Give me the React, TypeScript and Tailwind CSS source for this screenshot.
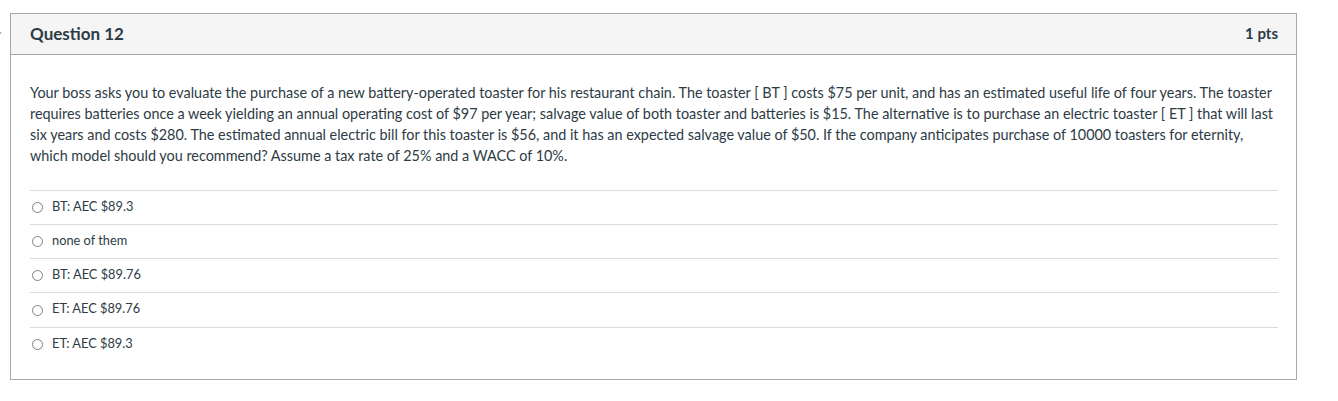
import React from "react";

const answers = ["BT: AEC $89.3", "none of them", "BT: AEC $89.76", "ET: AEC $89.76", "ET: AEC $89.3"];

export default function App() {
  return (
    <div className="relative w-[1338px] h-[401px] bg-white" style={{ fontFamily: "Lato, 'Noto Sans', sans-serif" }}>
      <div className="absolute left-[-4px] top-[29px] w-0 h-0 border-y-[4px] border-y-transparent border-l-[6px] border-l-[#9fb4c4]" />
      <div className="ml-[10px] pt-[13px] w-[1287px]">
        <div className="border border-[#a8a8a8]">
          <div className="h-[41px] bg-[#f5f5f5] border-b border-[#a8a8a8] flex items-center justify-between pl-[19px] pr-[18px] text-[#2d3b45]">
            <span className="text-[17px] font-bold -mt-[1px]">Question 12</span>
            <span className="text-[15px] font-bold -mt-[1px]">1 pts</span>
          </div>
          <div className="pl-[19px] pr-[18px] pt-[27px] pb-[18px]">
            <p className="text-[14.4px] leading-[21px] text-[#2d3b45]">
              Your boss asks you to evaluate the purchase of a new battery-operated toaster for his restaurant chain. The toaster [ BT ] costs $75 per unit, and has an estimated useful life of four years. The toaster requires batteries once a week yielding an annual operating cost of $97 per year; salvage value of both toaster and batteries is $15. The alternative is to purchase an electric toaster [ ET ] that will last six years and costs $280. The estimated annual electric bill for this toaster is $56, and it has an expected salvage value of $50. If the company anticipates purchase of 10000 toasters for eternity, which model should you recommend? Assume a tax rate of 25% and a WACC of 10%.
            </p>
            <div className="mt-[24px]">
              {answers.map((a, i) => (
                <div key={a} className={`border-t border-[#dcdcdc] flex items-center pl-[2px] ${i === 3 ? "h-[35px]" : "h-[34px]"}`}>
                  <span className="w-[11px] h-[11px] rounded-full border border-[#808080] bg-white" />
                  <span className="ml-[9px] text-[12.8px] text-[#2d3b45] -mt-[2px]">{a}</span>
                </div>
              ))}
            </div>
          </div>
        </div>
      </div>
    </div>
  );
}
